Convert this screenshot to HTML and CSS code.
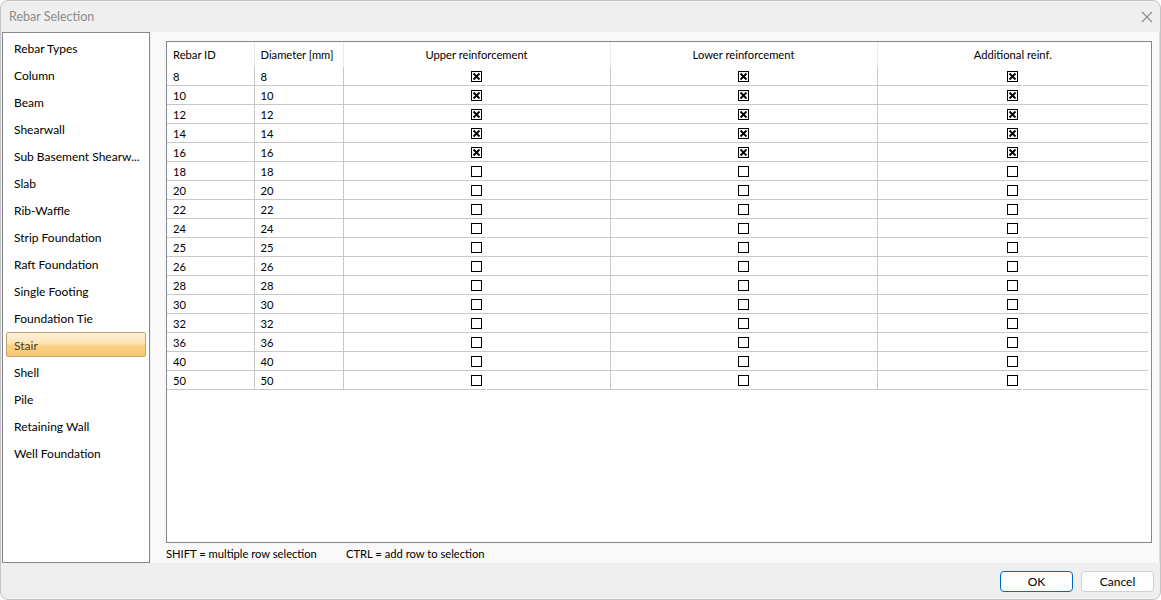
FILE: index.html
```html
<!DOCTYPE html>
<html lang="en">

<head>
    <meta charset="UTF-8">
    <title>Rebar Selection</title>
    <link rel="stylesheet" href="styles.css">
</head>

<body>
    <div class="window">
        <div class="titlebar">
            <span class="title">Rebar Selection</span>
            <svg class="close" width="12" height="12" viewBox="0 0 12 12">
                <path d="M1 1L11 11M11 1L1 11" stroke="#8a8a8a" stroke-width="1.1" fill="none"/>
            </svg>
        </div>

        <div class="content">
            <ul class="sidebar">
                <li>Rebar Types</li>
                <li>Column</li>
                <li>Beam</li>
                <li>Shearwall</li>
                <li>Sub Basement Shearw...</li>
                <li>Slab</li>
                <li>Rib-Waffle</li>
                <li>Strip Foundation</li>
                <li>Raft Foundation</li>
                <li>Single Footing</li>
                <li>Foundation Tie</li>
                <li class="selected">Stair</li>
                <li>Shell</li>
                <li>Pile</li>
                <li>Retaining Wall</li>
                <li>Well Foundation</li>
            </ul>

            <div class="main">
                <div class="grid">
                    <table>
                        <colgroup>
                            <col class="w-id">
                            <col class="w-dia">
                            <col class="w-chk">
                            <col class="w-chk">
                            <col>
                        </colgroup>
                        <thead>
                            <tr>
                                <th class="left">Rebar ID</th>
                                <th class="left">Diameter [mm]</th>
                                <th>Upper reinforcement</th>
                                <th>Lower reinforcement</th>
                                <th>Additional reinf.</th>
                            </tr>
                        </thead>
                        <tbody id="rows"></tbody>
                    </table>
                </div>
                <div class="hints">
                    <span class="hint">SHIFT = multiple row selection</span>
                    <span>CTRL = add row to selection</span>
                </div>
            </div>
        </div>

        <div class="footer">
            <button class="btn btn-ok">OK</button>
            <button class="btn">Cancel</button>
        </div>
    </div>

    <script>
        var sizes = [8, 10, 12, 14, 16, 18, 20, 22, 24, 25, 26, 28, 30, 32, 36, 40, 50];
        var checkedUpTo = 16;

        var box = '<svg width="11" height="11" viewBox="0 0 11 11"><rect x="0.5" y="0.5" width="10" height="10" fill="#fff" stroke="#000"/></svg>';
        var boxChecked = '<svg width="11" height="11" viewBox="0 0 11 11"><rect x="0.5" y="0.5" width="10" height="10" fill="#fff" stroke="#000"/>' +
            '<path d="M2.5 2.5L8.5 8.5M8.5 2.5L2.5 8.5" stroke="#000" stroke-width="1.8"/></svg>';

        var tbody = document.getElementById('rows');
        sizes.forEach(function (d) {
            var chk = d <= checkedUpTo ? boxChecked : box;
            var tr = document.createElement('tr');
            tr.innerHTML = '<td>' + d + '</td><td>' + d + '</td>' +
                '<td class="chk">' + chk + '</td>' +
                '<td class="chk">' + chk + '</td>' +
                '<td class="chk">' + chk + '</td>';
            tbody.appendChild(tr);
        });
    </script>
</body>

</html>
```

FILE: styles.css
```css
body {
    margin: 0;
    background: #fff;
    font-family: Lato, "Noto Sans", sans-serif;
    font-size: 11.2px;
    color: #000;
}

.window {
    width: 1161px;
    height: 600px;
    box-sizing: border-box;
    border: 1px solid #c4c4c4;
    border-radius: 8px;
    background: #efefef;
    display: flex;
    flex-direction: column;
    overflow: hidden;
}

.titlebar {
    height: 31px;
    display: flex;
    align-items: center;
    justify-content: space-between;
    padding: 0 7px 0 8px;
}

.title {
    color: #8c8c8c;
    font-size: 12.5px;
}

/* middle part */
.content {
    display: flex;
    height: 531px;
    padding-left: 1px;
}

.sidebar {
    width: 148px;
    box-sizing: border-box;
    margin: 0;
    padding: 1px 0 0 0;
    list-style: none;
    background: #fff;
    border: 1px solid #828790;
}

.sidebar li {
    height: 27px;
    line-height: 29px;
    margin: 0 3px;
    padding-left: 8px;
    font-size: 12px;
    white-space: nowrap;
    overflow: hidden;
}

.sidebar li.selected {
    height: 23px;
    line-height: 25px;
    margin: 1px 3px;
    border: 1px solid #c0a274;
    border-radius: 2px;
    padding-left: 7px;
    color: #4b4136;
    background: linear-gradient(to bottom, #fdf1dc 0%, #fde2af 48%, #fbd48a 52%, #f9c76d 100%);
}

.main {
    flex: 1;
    background: #f9f9f9;
    border-right: 1px solid #dedede;
    margin-left: 1px;
    padding: 9px 7px 0 15px;
    display: flex;
    flex-direction: column;
}

.grid {
    height: 503px;
    box-sizing: border-box;
    background: #fff;
    border: 1px solid #828790;
    overflow: hidden;
}

table {
    width: 981px;
    border-collapse: collapse;
    table-layout: fixed;
}

.w-id {
    width: 87px;
}

.w-dia {
    width: 89px;
}

.w-chk {
    width: 267px;
}

th {
    height: 25px;
    padding: 0;
    font-weight: normal;
    text-align: center;
    white-space: nowrap;
    border-left: 1px solid #ececec;
}

th.left {
    text-align: left;
    padding-left: 6px;
}

th:first-child,
td:first-child {
    border-left: none;
}

td {
    height: 17px;
    line-height: 17px;
    padding: 1px 0 0 6px;
    border-left: 1px solid #c8c8c8;
    border-bottom: 1px solid #c8c8c8;
}

td.chk {
    height: 18px;
    padding: 0;
}

td.chk svg {
    display: block;
    margin: 0 auto;
}

.hints {
    display: flex;
    height: 20px;
    line-height: 21px;
}

.hint {
    width: 180px;
}

/* bottom buttons */
.footer {
    flex: 1;
    display: flex;
    justify-content: flex-end;
    align-items: flex-start;
    gap: 8px;
    padding: 8px 6px 0 0;
}

.btn {
    width: 73px;
    height: 21px;
    padding: 0;
    background: #fdfdfd;
    border: 1px solid #d0d0d0;
    border-radius: 4px;
    font-family: Lato, "Noto Sans", sans-serif;
    font-size: 12px;
    color: #000;
}

.btn-ok {
    border-color: #0067c0;
}
```
